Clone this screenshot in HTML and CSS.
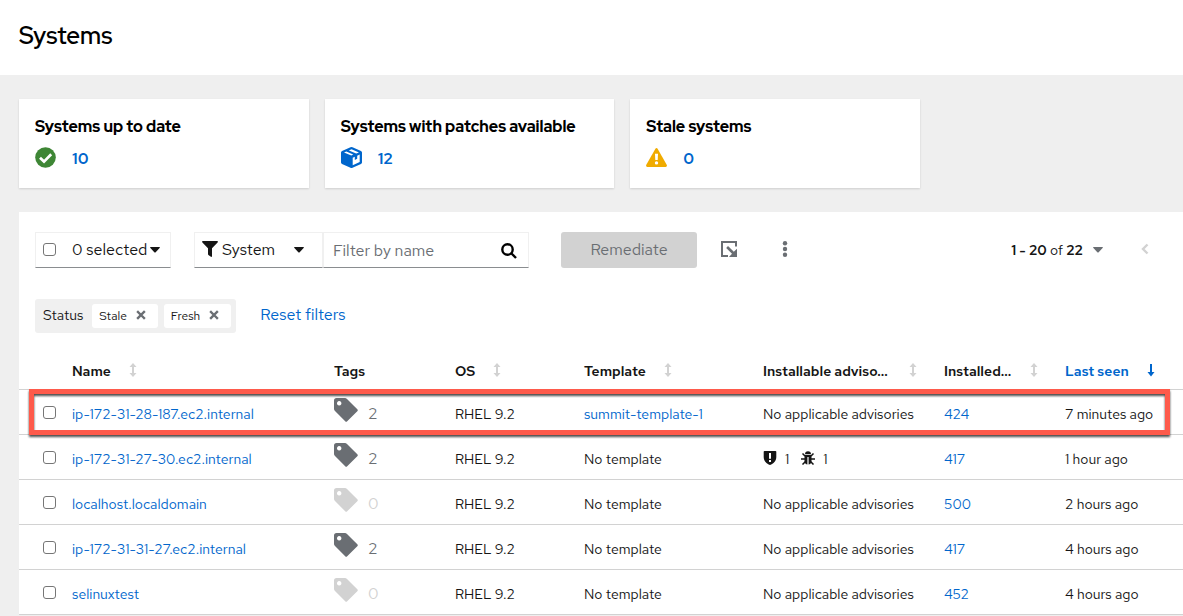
FILE: index.html
```html
<!DOCTYPE html>
<html lang="en">
<head>
<meta charset="utf-8">
<title>Systems</title>
<link rel="stylesheet" href="styles.css">
</head>
<body>
<svg width="0" height="0" class="sprite" aria-hidden="true">
  <symbol id="tag" viewBox="0 0 24 24"><path fill-rule="evenodd" d="M0 2.500Q0 0 2.500 0H11Q12 0 13 1L23.300 11.200Q24.300 12.200 23.300 13.200L13.200 23.300Q12.200 24.300 11.200 23.300L1 13Q0 12 0 11ZM5.200 3.100a2.200 2.200 0 1 0 .01 0Z"/></symbol>
  <symbol id="sort" viewBox="0 0 8 14"><path d="M4 0L7.500 4H5V10H7.500L4 14L.5 10H3V4H.5Z"/></symbol>
  <symbol id="caret" viewBox="0 0 10 6"><path d="M.6 0H9.400Q10.300.3 9.600 1L5.700 5.200Q5 5.800 4.300 5.200L.4 1Q-.3.3.6 0Z"/></symbol>
  <symbol id="cross" viewBox="0 0 10 10"><path d="M2 2L8 8M8 2L2 8" fill="none" stroke="currentColor" stroke-width="2.400" stroke-linecap="square"/></symbol>
</svg>
<header class="page-header"><h1>Systems</h1></header>
<main class="page-main">
  <section class="cards">
    <article class="card">
      <h2>Systems up to date</h2>
      <div class="card-stat">
        <svg class="stat-icon green" viewBox="0 0 21 21"><circle cx="10.500" cy="10.500" r="10.300"/><path d="M5 10.800L9 14.600L16.200 7.200" fill="none" stroke="#fff" stroke-width="2.700"/></svg>
        <a href="#">10</a>
      </div>
    </article>
    <article class="card">
      <h2>Systems with patches available</h2>
      <div class="card-stat">
        <svg class="stat-icon blue" viewBox="0 0 21 21"><path d="M9.500.3Q10.500-.2 11.500.3L20 3.900Q21 4.400 21 5.400V15.600Q21 16.600 20 17L11.500 20.700Q10.500 21.200 9.500 20.700L1 17Q0 16.600 0 15.600V5.400Q0 4.400 1 3.900Z"/><path d="M3 5.500L5.300 4.500L12.200 7.600L10.300 8.500ZM7.900 3.400L10.500 2.300L18 5.500L15.200 6.500ZM11.700 10.800L13.800 9.800V13L16.200 11.800V8.700L18.700 7.600V15L11.700 18.200Z" fill="#fff"/></svg>
        <a href="#">12</a>
      </div>
    </article>
    <article class="card">
      <h2>Stale systems</h2>
      <div class="card-stat">
        <svg class="stat-icon gold" viewBox="0 0 21 21"><path d="M9.400 1.800Q10.500 0 11.600 1.800L20.700 17.800Q21.500 19.800 19.700 20H1.300Q-.5 19.800.3 17.800Z"/><path d="M9 6.800H12L11.700 13H9.300Z" fill="#fff"/><circle cx="10.500" cy="15.900" r="1.700" fill="#fff"/></svg>
        <a href="#">0</a>
      </div>
    </article>
  </section>

  <section class="panel">
    <div class="toolbar">
      <div class="control bulk">
        <input type="checkbox" aria-label="Select all">
        <button type="button" class="bulk-toggle">0 selected<svg class="caret"><use href="#caret"/></svg></button>
      </div>
      <div class="filter">
        <label class="control filter-type">
          <svg class="funnel" viewBox="0 0 16 16"><path d="M.8 0H15.200Q16.400.5 15.600 1.400L10 7.200V15.200Q9.800 16.300 8.900 15.800L6.400 13.900Q6 13.500 6 13V7.200L.4 1.400Q-.4.5.8 0Z"/></svg>
          <select aria-label="Filter type"><option>System</option></select>
          <svg class="caret"><use href="#caret"/></svg>
        </label>
        <div class="control search">
          <input type="text" placeholder="Filter by name" aria-label="Filter by name">
          <button type="button" aria-label="Search"><svg class="glass" viewBox="0 0 16 16"><circle cx="6.500" cy="6.500" r="5.200"/><path d="M10.500 10.500L15 15"/></svg></button>
        </div>
      </div>
      <button type="button" class="remediate" disabled>Remediate</button>
      <button type="button" class="icon-button export" aria-label="Export"><svg viewBox="0 0 16 16"><path d="M7 15H1V1H15V5.500" fill="none" stroke="currentColor" stroke-width="2"/><path d="M7 5L12.800 10.800L16 7.800V16H8L11 12.700L5.200 6.900Z"/></svg></button>
      <button type="button" class="icon-button kebab" aria-label="More actions"><svg viewBox="0 0 16 16"><circle cx="8" cy="2.300" r="2.200"/><circle cx="8" cy="8" r="2.200"/><circle cx="8" cy="13.700" r="2.200"/></svg></button>
      <div class="pagination">
        <button type="button" class="page-toggle"><span><b>1 - 20</b> of <b>22</b></span><svg class="caret"><use href="#caret"/></svg></button>
        <button type="button" class="previous" aria-label="Previous page" disabled><svg viewBox="0 0 8 12"><path d="M6.500 1.500L2 6L6.500 10.500"/></svg></button>
      </div>
    </div>

    <div class="filters">
      <div class="chip-group">
        <span class="chip-label">Status</span>
        <span class="chip">Stale<button type="button" aria-label="Remove Stale"><svg><use href="#cross"/></svg></button></span>
        <span class="chip">Fresh<button type="button" aria-label="Remove Fresh"><svg><use href="#cross"/></svg></button></span>
      </div>
      <button type="button" class="reset">Reset filters</button>
    </div>

    <div class="table-wrap">
      <table>
        <colgroup><col class="c-check"><col class="c-name"><col class="c-tags"><col class="c-os"><col class="c-template"><col class="c-installable"><col class="c-installed"><col class="c-seen"></colgroup>
        <thead>
          <tr>
            <td></td>
            <th scope="col"><button type="button">Name<svg class="sort"><use href="#sort"/></svg></button></th>
            <th scope="col">Tags</th>
            <th scope="col"><button type="button">OS<svg class="sort"><use href="#sort"/></svg></button></th>
            <th scope="col"><button type="button">Template<svg class="sort"><use href="#sort"/></svg></button></th>
            <th scope="col"><button type="button" class="spread">Installable adviso...<svg class="sort"><use href="#sort"/></svg></button></th>
            <th scope="col"><button type="button" class="spread">Installed...<svg class="sort"><use href="#sort"/></svg></button></th>
            <th scope="col" aria-sort="descending"><button type="button" class="sorted">Last seen<svg class="sort" viewBox="0 0 8 14"><path d="M3 1H5V9H7.500L4 13.500L.5 9H3Z"/></svg></button></th>
          </tr>
        </thead>
        <tbody>
          <tr>
            <td><input type="checkbox" aria-label="Select ip-172-31-28-187.ec2.internal"></td>
            <td><a href="#">ip-172-31-28-187.ec2.internal</a></td>
            <td><button type="button" class="tags"><svg><use href="#tag"/></svg>2</button></td>
            <td>RHEL 9.2</td><td><a href="#">summit-template-1</a></td><td>No applicable advisories</td><td><a href="#">424</a></td><td>7 minutes ago</td>
          </tr>
          <tr>
            <td><input type="checkbox" aria-label="Select ip-172-31-27-30.ec2.internal"></td>
            <td><a href="#">ip-172-31-27-30.ec2.internal</a></td>
            <td><button type="button" class="tags"><svg><use href="#tag"/></svg>2</button></td>
            <td>RHEL 9.2</td><td>No template</td>
            <td><div class="advisories">
              <span><svg viewBox="0 0 14 14"><path fill-rule="evenodd" d="M1.500 0H12.500Q13.300 0 13.300.8V6C13.300 10 10.500 12.700 7 14C3.500 12.700.7 10 .7 6V.8Q.7 0 1.500 0ZM6 2V7.800H8V2ZM6 9V11H8V9Z"/></svg>1</span>
              <span><svg viewBox="0 0 14 14"><path d="M4 3.300A3 3 0 0 1 10 3.300ZM3.500 4H10.500V10.500Q10 13.300 7.600 13.500V6H6.400V13.500Q4 13.300 3.500 10.500Z"/><path d="M1.500 2.500L4 5M12.500 2.500L10 5M0 8H4M10 8H14M1.500 13.500L4.500 10.500M12.500 13.500L9.500 10.500" stroke="currentColor" stroke-width="1.500"/></svg>1</span>
            </div></td>
            <td><a href="#">417</a></td><td>1 hour ago</td>
          </tr>
          <tr>
            <td><input type="checkbox" aria-label="Select localhost.localdomain"></td>
            <td><a href="#">localhost.localdomain</a></td>
            <td><button type="button" class="tags" disabled><svg><use href="#tag"/></svg>0</button></td>
            <td>RHEL 9.2</td><td>No template</td><td>No applicable advisories</td><td><a href="#">500</a></td><td>2 hours ago</td>
          </tr>
          <tr>
            <td><input type="checkbox" aria-label="Select ip-172-31-31-27.ec2.internal"></td>
            <td><a href="#">ip-172-31-31-27.ec2.internal</a></td>
            <td><button type="button" class="tags"><svg><use href="#tag"/></svg>2</button></td>
            <td>RHEL 9.2</td><td>No template</td><td>No applicable advisories</td><td><a href="#">417</a></td><td>4 hours ago</td>
          </tr>
          <tr>
            <td><input type="checkbox" aria-label="Select selinuxtest"></td>
            <td><a href="#">selinuxtest</a></td>
            <td><button type="button" class="tags" disabled><svg><use href="#tag"/></svg>0</button></td>
            <td>RHEL 9.2</td><td>No template</td><td>No applicable advisories</td><td><a href="#">452</a></td><td>4 hours ago</td>
          </tr>
        </tbody>
      </table>
      <div class="highlight"></div>
    </div>
  </section>
</main>
</body>
</html>
```
FILE: styles.css
```css
* { box-sizing: border-box; }
body {
  margin: 0;
  background: #efefef;
  color: #151515;
  font: 14px/20px "Red Hat Text", Lato, sans-serif;
}
button, input, select {
  font: inherit;
  color: inherit;
  margin: 0;
}
button {
  padding: 0;
  border: 0;
  background: none;
  white-space: nowrap;
}
svg { fill: currentColor; flex: none; }
a { color: #06c; text-decoration: none; }
b { font-weight: 600; }
.sprite { position: absolute; }

input[type="checkbox"] {
  appearance: none;
  display: block;
  width: 13px;
  height: 13px;
  border: 1px solid #767676;
  border-radius: 3px;
  background: #fff;
  flex: none;
}

.page-header { background: #fff; padding: 20px 19px 23px; }
h1, h2 { font-family: "Red Hat Display", "Red Hat Text", Lato, sans-serif; color: #000; }
h1 { margin: 0; font-size: 24px; line-height: 32px; font-weight: 600; }
.page-main { padding: 24px 0 0 19px; }

.cards {
  display: grid;
  grid-template-columns: repeat(3, 1fr);
  gap: 16px;
  max-width: 901px;
  margin-bottom: 24px;
}
.card {
  padding: 16px 16px 20px;
  background: #fff;
  box-shadow: 0 1px 2px rgba(3, 3, 3, .14);
}
.card h2 { margin: 0 0 8px; font-size: 16px; line-height: 24px; font-weight: 800; white-space: nowrap; }
.card-stat { display: flex; align-items: flex-start; gap: 16px; line-height: 23px; height: 21px; font-size: 16px; font-weight: 600; }
.stat-icon { width: 21px; height: 21px; }
.green { color: #3e8635; }
.blue { color: #06c; }
.gold { color: #f0ab00; }

.panel { background: #fff; padding-top: 20px; }
.toolbar { display: flex; align-items: center; padding: 0 34px 0 16px; font-size: 16px; }
.control {
  display: flex;
  align-items: center;
  height: 36px;
  border: 1px solid #f0f0f0;
  border-bottom-color: #8a8d90;
}
.bulk { width: 136px; gap: 16px; padding: 0 8px 0 7px; }
.bulk input { margin-bottom: 2px; }
.bulk-toggle { display: flex; align-items: center; gap: 3px; }
.caret { width: 10px; height: 6px; }
.filter { display: flex; margin-left: 23px; }
.filter-type { width: 129px; padding: 0 18px 0 7px; gap: 4px; }
.filter-type select { appearance: none; border: 0; background: none; padding: 0; flex: 1; min-width: 0; }
.funnel { width: 16px; height: 16px; margin-bottom: 2px; }
.search { width: 206px; padding: 2px 11px 0 9px; }
.search input { flex: 1; min-width: 0; border: 0; padding: 0; background: none; }
.search input::placeholder { color: #6a6e73; opacity: 1; }
.glass { display: block; width: 16px; height: 16px; fill: none; stroke: #000; stroke-width: 2.4; }
.remediate {
  width: 136px;
  height: 36px;
  margin-left: 32px;
  border-radius: 3px;
  background: #d2d2d2;
  color: #6a6e73;
}
.icon-button { color: #6a6e73; margin-bottom: 2px; }
.icon-button svg { display: block; width: 16px; height: 16px; }
.export { margin-left: 24px; }
.kebab { margin-left: 40px; }
.pagination { display: flex; align-items: center; gap: 38px; margin-left: auto; font-size: 14px; }
.page-toggle { display: flex; align-items: center; gap: 10px; }
.page-toggle .caret { color: #6a6e73; }
.previous svg { display: block; width: 8px; height: 12px; margin-bottom: 2px; fill: none; stroke: #d2d2d2; stroke-width: 2.4; }

.filters { display: flex; align-items: center; gap: 24px; padding: 31px 16px 19px; }
.chip-group {
  display: flex;
  align-items: center;
  gap: 6px;
  padding: 5px 5px 5px 8px;
  border-radius: 3px;
  background: #f0f0f0;
}
.chip-label { margin: 0 3px 2px 0; }
.chip {
  display: flex;
  align-items: center;
  gap: 9px;
  padding: 2px 12px 2px 7px;
  border-radius: 3px;
  background: #fff;
  font-size: 12px;
}
.chip svg { display: block; width: 10px; height: 10px; margin-bottom: 2px; color: #6a6e73; }
.reset { color: #06c; font-size: 16px; margin-bottom: 2px; }

.table-wrap { position: relative; }
table { width: 100%; table-layout: fixed; border-collapse: collapse; }
.c-check { width: 37px; }
.c-tags, .c-installed { width: 121px; }
.c-os { width: 129px; }
.c-template { width: 179px; }
.c-installable { width: 181px; }
.c-seen { width: 134px; }
th, td {
  height: 45px;
  padding: 4px 0 0 16px;
  border-bottom: 1px solid #d2d2d2;
  text-align: left;
  vertical-align: middle;
  white-space: nowrap;
}
thead td, thead th { height: 37px; padding-top: 2px; }
th { font-weight: 600; }
th button { display: flex; align-items: center; gap: 18px; }
th .spread { width: 100%; padding-right: 11px; justify-content: space-between; gap: 0; }
.sort { width: 8px; height: 14px; color: #d2d2d2; margin-bottom: 2px; }
.sorted, .sorted .sort { color: #06c; }
td input[type="checkbox"] { margin: 0 0 3px 8px; }
.tags { display: flex; align-items: center; gap: 10px; font-size: 16px; color: #6a6e73; }
.tags svg { width: 24px; height: 24px; margin-bottom: 8px; }
.tags:disabled { color: #d2d2d2; }
.advisories { display: flex; gap: 12px; }
.advisories span { display: flex; align-items: center; gap: 8px; }
.advisories svg { width: 14px; height: 14px; margin-bottom: 2px; }
.highlight {
  position: absolute;
  top: 37px;
  left: 10px;
  right: 13px;
  height: 46px;
  border: 5px solid #fe5a4b;
  filter: drop-shadow(0 2px 1px rgba(0, 0, 0, .7));
  pointer-events: none;
}
```
